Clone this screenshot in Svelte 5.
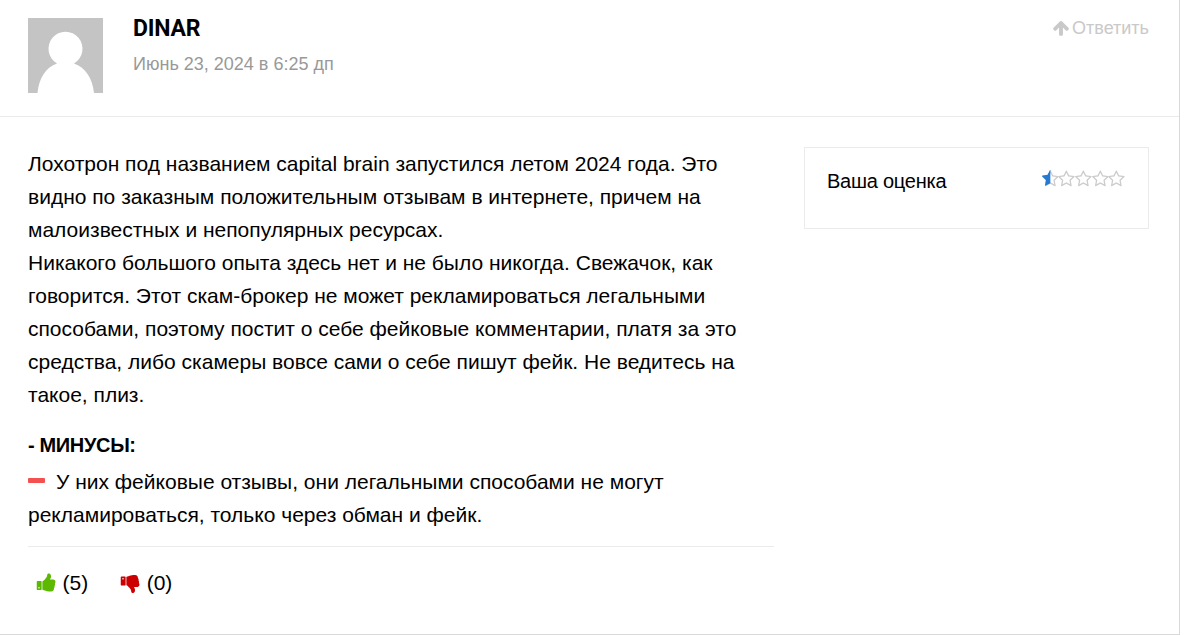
<script lang="ts">
  const author = 'DINAR';
  const date = 'Июнь 23, 2024 в 6:25 дп';
  const paragraphs = [
    [
      'Лохотрон под названием capital brain запустился летом 2024 года. Это',
      'видно по заказным положительным отзывам в интернете, причем на',
      'малоизвестных и непопулярных ресурсах.'
    ],
    [
      'Никакого большого опыта здесь нет и не было никогда. Свежачок, как',
      'говорится. Этот скам-брокер не может рекламироваться легальными',
      'способами, поэтому постит о себе фейковые комментарии, платя за это',
      'средства, либо скамеры вовсе сами о себе пишут фейк. Не ведитесь на',
      'такое, плиз.'
    ]
  ];
  const cons = ['У них фейковые отзывы, они легальными способами не могут', 'рекламироваться, только через обман и фейк.'];

  const rating = 0.5;
  const stars = [1, 2, 3, 4, 5];
  let likes = $state(5);
  let dislikes = $state(0);
</script>

<article class="review">
  <header class="head">
    <svg class="avatar" viewBox="0 0 75 75" aria-hidden="true">
      <rect width="75" height="75" fill="#c4c4c4" />
      <path fill="#fff" d="M9.5 75C11 60 18 49 29 45.5a17 17 0 1 1 17 0C57 49 64.500 60 66 75z" />
    </svg>
    <div class="who">
      <div class="name">{author}</div>
      <div class="date">{date}</div>
    </div>
    <button type="button" class="reply">
      <svg class="arrow" viewBox="0 0 1792 1792" aria-hidden="true">
        <path d="M1675 971q0 51-37 90l-75 75q-38 38-91 38-54 0-90-38l-294-293v704q0 52-37.5 84.5t-90.5 32.5h-128q-53 0-90.5-32.5t-37.5-84.5v-704l-294 293q-36 38-90 38t-90-38l-75-75q-38-38-38-90 0-53 38-91l651-651q35-37 90-37 54 0 91 37l651 651q37 39 37 91z" />
      </svg>
      <span>Ответить</span>
    </button>
  </header>

  <div class="body">
    <div class="content">
      <div class="text">
        {#each paragraphs as lines}
          {#each lines as line}
            <div>{line}</div>
          {/each}
        {/each}
      </div>

      <div class="consTitle">- МИНУСЫ:</div>
      <div class="text">
        {#each cons as line, i}
          <div>
            {#if i === 0}<span class="minus" aria-hidden="true"></span>{/if}{line}
          </div>
        {/each}
      </div>

      <footer class="votes">
        <button type="button" class="vote up" onclick={() => likes++}>
          <svg viewBox="0 0 1792 1792" aria-hidden="true">
            <path d="M320 1344q0-26-19-45t-45-19q-27 0-45.500 19t-18.500 45q0 27 18.500 45.500t45.500 18.500q26 0 45-18.500t19-45.500zm160-512v640q0 26-19 45t-45 19h-288q-26 0-45-19t-19-45v-640q0-26 19-45t45-19h288q26 0 45 19t19 45zm1184 0q0 86-55 149 15 44 15 76 3 76-43 137 17 56 0 117-15 57-54 94 9 112-49 181-64 76-197 78h-129q-66 0-144-15.500t-121.500-29-120.500-39.500q-123-43-158-44-26-1-45-19.500t-19-44.500v-641q0-25 18-43.500t43-20.500q24-2 76-59t101-121q68-87 101-120 18-18 31-48t17.500-48.500 13.500-60.500q7-39 12.500-61t19.500-52 34-50q19-19 45-19 46 0 82.500 10.500t60 26 40 40.500 24 45 12 50 5 45 .5 39q0 38-9.500 76t-19 60-27.500 56q-3 6-10 18t-11 22-8 24h277q78 0 135 57t57 135z" />
          </svg>
          <span>({likes})</span>
        </button>
        <button type="button" class="vote down" onclick={() => dislikes++}>
          <svg viewBox="0 0 1792 1792" aria-hidden="true">
            <path d="M320 576q0 26-19 45t-45 19q-27 0-45.500-19t-18.500-45q0-27 18.500-45.500t45.500-18.500q26 0 45 18.500t19 45.500zm160 512v-640q0-26-19-45t-45-19h-288q-26 0-45 19t-19 45v640q0 26 19 45t45 19h288q26 0 45-19t19-45zm1129-149q55 61 55 149-1 78-57.500 135t-134.500 57h-277q4 14 8 24t11 22 10 18q18 37 27 57t19 58.500 10 76.500q0 24-.5 39t-5 45-12 50-24 45-40 40.500-60 26-82.500 10.500q-26 0-45-19-20-20-34-50t-19.500-52-12.500-61q-9-42-13.500-60.500t-17.500-48.500-31-48q-33-33-101-120-49-64-101-121t-76-59q-25-2-43-20.500t-18-43.500v-641q0-26 19-44.500t45-19.500q35-1 158-44 77-26 120.500-39.500t121.500-29 144-15.500h129q133 2 197 78 58 69 49 181 39 37 54 94 17 61 0 117 46 61 43 137 0 32-15 76z" />
          </svg>
          <span>({dislikes})</span>
        </button>
      </footer>
    </div>

    <aside class="score">
      <span class="scoreLabel">Ваша оценка</span>
      <span class="stars" role="img" aria-label={`${rating} / 5`}>
        {#each stars as n}
          <svg viewBox="64 0 1664 1792" aria-hidden="true">
            <path class="empty" d="M1201 1004l306-297-422-62-189-382-189 382-422 62 306 297-73 421 378-199 377 199zm527-357q0 22-26 48l-363 354 86 500q1 7 1 20 0 50-41 50-19 0-40-12l-449-236-449 236q-22 12-40 12-21 0-31.500-14.500t-10.500-35.500q0-6 2-20l86-500-364-354q-25-27-25-48 0-37 56-46l502-73 225-455q19-41 49-41t49 41l225 455 502 73q56 9 56 46z" />
            {#if rating >= n - 0.5}
              <path class="half" d="M896 1313l-449 236q-22 12-40 12-21 0-31.500-14.500t-10.500-35.500q0-6 2-20l86-500-364-354q-25-27-25-48 0-37 56-46l502-73 225-455q19-41 49-41z" />
            {/if}
          </svg>
        {/each}
      </span>
    </aside>
  </div>
</article>

<style>
  :global(body) {
    background: #fff;
  }

  .review {
    box-sizing: border-box;
    width: 1180px;
    height: 635px;
    border-right: 1px solid #d9d9d9;
    border-bottom: 1px solid #d9d9d9;
    font-family: 'Liberation Sans', Arial, sans-serif;
    color: #000;
  }

  button {
    padding: 0;
    border: 0;
    background: none;
    font: inherit;
    color: inherit;
    cursor: pointer;
  }

  .head {
    box-sizing: border-box;
    height: 117px;
    padding: 18px 30px 0 28px;
    display: flex;
    align-items: flex-start;
    border-bottom: 1px solid #ebebeb;
  }

  .avatar {
    width: 75px;
    height: 75px;
    margin-right: 30px;
  }

  .who {
    flex: 1;
  }
  .name {
    font-family: Roboto, sans-serif;
    font-size: 23px;
    font-weight: 700;
    line-height: 22px;
    letter-spacing: -0.2px;
  }
  .date {
    margin-top: 14px;
    font-size: 18px;
    line-height: 20px;
    color: #999;
    white-space: nowrap;
  }

  .reply {
    display: flex;
    align-items: center;
    gap: 2px;
    font-size: 18px;
    line-height: 20px;
    color: #c9c9c9;
  }
  .arrow {
    width: 18px;
    height: 18px;
    fill: currentColor;
  }

  .body {
    display: flex;
    align-items: flex-start;
    gap: 30px;
    padding: 30px 30px 0 28px;
  }

  .content {
    width: 746px;
    font-size: 21px;
  }
  .text {
    line-height: 33px;
    white-space: nowrap;
  }

  .consTitle {
    margin: 22px 0 7px;
    font-size: 20px;
    font-weight: 700;
    line-height: 25px;
    letter-spacing: -0.35px;
  }
  .minus {
    display: inline-block;
    width: 17px;
    height: 5px;
    margin-right: 11px;
    border-radius: 1px;
    background: #f55050;
    vertical-align: 6px;
  }

  .votes {
    display: flex;
    gap: 32px;
    margin-top: 15px;
    padding: 19px 0 0 8px;
    border-top: 1px solid #ebebeb;
    line-height: 33px;
  }
  .vote {
    display: flex;
    align-items: center;
    gap: 5.5px;
  }
  .vote svg {
    width: 21px;
    height: 21px;
  }
  .up svg {
    fill: #5cb800;
  }
  .down svg {
    fill: #c00;
  }

  .score {
    box-sizing: border-box;
    flex: 1;
    height: 82px;
    padding: 21px 23px 0 22px;
    display: flex;
    align-items: flex-start;
    justify-content: space-between;
    border: 1px solid #ebebeb;
  }
  .scoreLabel {
    font-size: 20px;
    line-height: 25px;
    letter-spacing: -0.25px;
  }
  .stars {
    display: flex;
    padding-top: 1px;
  }
  .stars svg {
    width: 16.7px;
    height: 18px;
  }
  .empty {
    fill: #ccc;
  }
  .half {
    fill: #2679d3;
  }
</style>
